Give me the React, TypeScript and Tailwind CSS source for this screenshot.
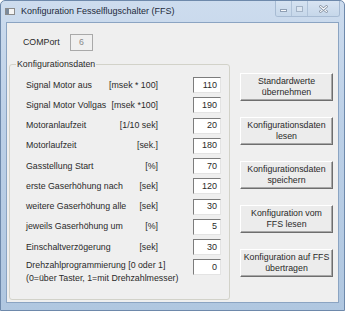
import React from "react";

const rows: { label: string; unit: string; value: string }[] = [
  { label: "Signal Motor aus", unit: "[msek * 100]", value: "110" },
  { label: "Signal Motor Vollgas", unit: "[msek *100]", value: "190" },
  { label: "Motoranlaufzeit", unit: "[1/10 sek]", value: "20" },
  { label: "Motorlaufzeit", unit: "[sek.]", value: "180" },
  { label: "Gasstellung Start", unit: "[%]", value: "70" },
  { label: "erste Gaserhöhung nach", unit: "[sek]", value: "120" },
  { label: "weitere Gaserhöhung alle", unit: "[sek]", value: "30" },
  { label: "jeweils Gaserhöhung um", unit: "[%]", value: "5" },
  { label: "Einschaltverzögerung", unit: "[sek]", value: "30" },
];

const buttons: [string, string][] = [
  ["Standardwerte", "übernehmen"],
  ["Konfigurationsdaten", "lesen"],
  ["Konfigurationsdaten", "speichern"],
  ["Konfiguration vom", "FFS lesen"],
  ["Konfiguration auf FFS", "übertragen"],
];

function NumBox({ value }: { value: string }) {
  return (
    <div className="w-[28px] h-[16px] bg-white border-t border-l border-[#7c7c7c] border-b-[#e3e3e3] border-r-[#e3e3e3] border-b border-r flex items-center justify-end pr-[3px] text-[9px] text-[#2a2a2a]">
      {value}
    </div>
  );
}

export default function App() {
  return (
    <div
      className="w-[345px] h-[311px] flex flex-col bg-[linear-gradient(180deg,#cddcee_0%,#bcd0e7_40%,#b0c7e0_100%)] border border-[#6e89ab] rounded-t-[5px] overflow-hidden"
      style={{ fontFamily: '"Liberation Sans", Arial, sans-serif' }}
    >
      {/* Title bar */}
      <div className="h-[20px] flex items-start relative">
        <div className="mt-[7px] ml-[4px] w-[10px] h-[7px] bg-[#f4f4f4] border border-[#8b8b8b] flex">
          <div className="w-[3px] h-full bg-[#7b8a9c]" />
        </div>
        <div className="ml-[6px] mt-[5px] text-[9px] leading-[11px] text-[#1d2a3a]">
          Konfiguration Fesselflugschalter (FFS)
        </div>
        <div className="ml-auto mr-[4px] flex h-[16px] border border-t-0 border-[#a7bbd3] rounded-b-[3px] overflow-hidden">
          <div className="w-[16px] h-full bg-[linear-gradient(180deg,#d6e3f1,#c6d7ea)] border-r border-[#b0c3d9] flex items-center justify-center">
            <div className="w-[7px] h-[3px] bg-[#f6f8fb] border border-[#8f9fb3] mt-[3px]" />
          </div>
          <div className="w-[16px] h-full bg-[linear-gradient(180deg,#d6e3f1,#c6d7ea)] border-r border-[#b0c3d9] flex items-center justify-center">
            <div className="w-[7px] h-[6px] border border-[#a3b3c6] bg-[#dce6f1]" />
          </div>
          <div className="w-[31px] h-full bg-[linear-gradient(180deg,#d8e4f2,#c6d7ea)] flex items-center justify-center">
            <svg width="9" height="8" viewBox="0 0 9 8">
              <path d="M1.5 1.5 L7.5 6.5 M7.5 1.5 L1.5 6.5" stroke="#7f8a99" strokeWidth="2.6" strokeLinecap="round" />
              <path d="M1.5 1.5 L7.5 6.5 M7.5 1.5 L1.5 6.5" stroke="#f3f6fa" strokeWidth="1.2" strokeLinecap="round" />
            </svg>
          </div>
        </div>
      </div>

      {/* Client area */}
      <div className="flex-1 mx-[5px] mb-[7px] mt-[1px] bg-[#efefef] border border-[#8ba4c2] flex flex-col text-[8.8px] leading-[11px] text-[#2a2a2a]">
        {/* COMPort */}
        <div className="mt-[11px] h-[17px] flex items-center">
          <span className="ml-[16px] w-[47px]">COMPort</span>
          <div className="w-[23px] h-[17px] border border-[#a9a9a9] bg-[#f0f0f0] flex items-center justify-center text-[#8a8a8a]">
            6
          </div>
        </div>

        <div className="flex items-start mt-[8px]">
          <fieldset className="ml-[2px] w-[221px] h-[241px] border border-[#d2d2c9] rounded-[3px] pl-[16px] pr-[8px]">
            <legend className="ml-[-10px] px-[1px] leading-[11px]">Konfigurationsdaten</legend>
            <div className="flex flex-col pt-[5px]">
              {rows.map((r) => (
                <div key={r.label} className="h-[20.25px] flex items-center">
                  <div className="w-[132px] flex justify-between">
                    <span>{r.label}</span>
                    <span>{r.unit}</span>
                  </div>
                  <div className="ml-[35px]">
                    <NumBox value={r.value} />
                  </div>
                </div>
              ))}
              <div className="flex items-start pt-[2px]">
                <div className="w-[132px] leading-[12.5px] whitespace-nowrap">
                  <div>Drehzahlprogrammierung [0 oder 1]</div>
                  <div>(0=über Taster, 1=mit Drehzahlmesser)</div>
                </div>
                <div className="ml-[35px]">
                  <NumBox value="0" />
                </div>
              </div>
            </div>
          </fieldset>

          <div className="ml-[10px] mt-[14px] w-[93px] flex flex-col gap-[16px]">
            {buttons.map(([a, b]) => (
              <div
                key={a + b}
                className="h-[28px] bg-[#ececec] border-t border-l border-[#ffffff] border-b border-r border-b-[#6e6e6e] border-r-[#6e6e6e] shadow-[inset_-1px_-1px_0_#a8a8a8] flex flex-col items-center justify-center leading-[11px] text-[#2a2a2a]"
              >
                <span>{a}</span>
                <span>{b}</span>
              </div>
            ))}
          </div>
        </div>
      </div>
    </div>
  );
}
